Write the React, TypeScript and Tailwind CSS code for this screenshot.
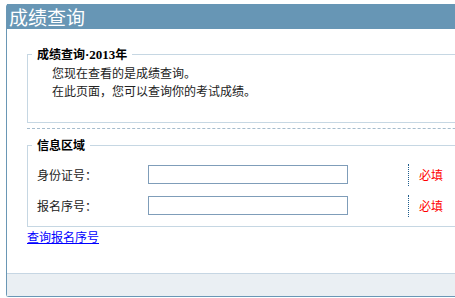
const font = 'font-["SimSun","Noto_Sans_CJK_SC",sans-serif]';

function Row({ label }: { label: string }) {
  return (
    <div className="flex items-center h-[19px]">
      <span className="w-[111px] text-[12px] text-[#222]">{label}</span>
      <input className="w-[200px] h-[19px] border border-[#7f9db9] bg-white outline-none" />
      <div className="ml-[60px] h-[22px] border-l border-dotted border-[#1f5d8c]" />
      <span className="ml-[10px] text-[12px] text-[#ff0000]">必填</span>
    </div>
  );
}

export default function App() {
  return (
    <div className={`w-[455px] h-[298px] overflow-hidden bg-white ${font}`}>
      <div className="mt-[4px] ml-[6px] w-[620px] border-l border-b border-[#6a97b5] rounded-tl-[3px] rounded-bl-[3px]">
        <div className="h-[25px] bg-[#6796b5] flex items-center pl-[2px]">
          <span className="text-[19px] leading-none text-white">成绩查询</span>
        </div>
        <div className="pl-[20px] pt-[17px] pb-[27px]">
          <fieldset className="border border-[#c6d7e3] pb-[22px] m-0">
            <legend className="ml-[4px] px-[5px] text-[12px] leading-[16px] font-bold text-black">
              成绩查询<span className='font-["Liberation_Serif",serif] text-[13px]'>·2013</span>年
            </legend>
            <div className="pl-[24px]">
              <p className="text-[12px] leading-[18px] text-[#222] mt-[1px]">您现在查看的是成绩查询。</p>
              <p className="text-[12px] leading-[18px] text-[#222]">在此页面，您可以查询你的考试成绩。</p>
            </div>
          </fieldset>
          <div className="mt-[5px] border-t border-dashed border-[#a5bccd]" />
          <fieldset className="mt-[8px] border border-[#c6d7e3] pt-[12px] pb-[11px] m-0">
            <legend className="ml-[4px] px-[5px] text-[12px] leading-[16px] font-bold text-black">信息区域</legend>
            <div className="pl-[9px] flex flex-col gap-[12px]">
              <Row label="身份证号：" />
              <Row label="报名序号：" />
            </div>
          </fieldset>
          <a href="#" className="block mt-[1px] text-[12px] leading-[18px] text-[#0000ff] underline w-fit">查询报名序号</a>
        </div>
        <div className="h-[23px] bg-[#eaeff3] border-t border-[#c6d6e3]" />
      </div>
    </div>
  );
}
